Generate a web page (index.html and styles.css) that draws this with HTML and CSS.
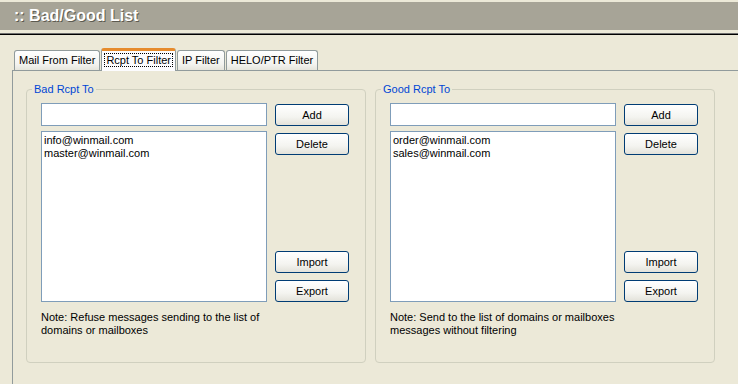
FILE: index.html
```html
<!DOCTYPE html>
<html lang="en">
<head>
    <meta charset="UTF-8">
    <title>Bad/Good List</title>
    <link rel="stylesheet" href="styles.css">
</head>
<body>
    <header class="page-title">
        <h1>:: Bad/Good List</h1>
    </header>
    <div class="title-rule"></div>

    <div class="tabs">
        <a href="#" class="tab">Mail From Filter</a>
        <a href="#" class="tab active"><span>Rcpt To Filter</span></a>
        <a href="#" class="tab">IP Filter</a>
        <a href="#" class="tab">HELO/PTR Filter</a>
    </div>
    <div class="tab-panel">
        <fieldset class="group">
            <legend>Bad Rcpt To</legend>
            <div class="group-body">
                <input type="text" class="entry">
                <div class="list">
                    <div>info@winmail.com</div>
                    <div>master@winmail.com</div>
                </div>
                <div class="buttons">
                    <button>Add</button>
                    <button>Delete</button>
                    <div class="spacer"></div>
                    <button>Import</button>
                    <button>Export</button>
                </div>
                <p class="note">Note: Refuse messages sending to the list of<br>domains or mailboxes</p>
            </div>
        </fieldset>
        <fieldset class="group">
            <legend>Good Rcpt To</legend>
            <div class="group-body">
                <input type="text" class="entry">
                <div class="list">
                    <div>order@winmail.com</div>
                    <div>sales@winmail.com</div>
                </div>
                <div class="buttons">
                    <button>Add</button>
                    <button>Delete</button>
                    <div class="spacer"></div>
                    <button>Import</button>
                    <button>Export</button>
                </div>
                <p class="note">Note: Send to the list of domains or mailboxes<br>messages without filtering</p>
            </div>
        </fieldset>
    </div>
</body>
</html>
```

FILE: styles.css
```css
html, body {
    height: 100%;
}
body {
    margin: 0;
    padding: 0;
    background-color: #ece9d8;
    font-family: Tahoma, "Liberation Sans", Arial, sans-serif;
    font-size: 11px;
    color: #000;
    overflow: hidden;
    display: flex;
    flex-direction: column;
}
.page-title {
    margin-top: 2px;
    height: 28px;
    flex-shrink: 0;
    background-color: #a7a497;
    display: flex;
    align-items: center;
    padding-left: 14px;
}
.page-title h1 {
    margin: 0;
    color: white;
    font-family: "Liberation Sans", Arial, sans-serif;
    font-size: 16px;
    font-weight: bold;
    text-shadow: 1px 1px 0 #5c5a50;
}
.title-rule {
    margin-top: 3px;
    border-top: 1px solid #6e6e6e;
    border-bottom: 1px solid #000;
}
.tabs {
    display: flex;
    align-items: flex-end;
    margin: 13px 0 0 14px;
    height: 22px;
    flex-shrink: 0;
    position: relative;
    z-index: 1;
}
.tab {
    display: block;
    height: 19px;
    line-height: 19px;
    padding: 0 4px;
    margin-right: 1px;
    color: #000;
    text-decoration: none;
    border: 1px solid #919b9c;
    border-bottom: none;
    border-radius: 3px 3px 0 0;
    background: linear-gradient(#ffffff, #f3f3ef 70%, #e6e5dc);
}
.tab.active {
    height: 20px;
    line-height: 18px;
    margin-bottom: -1px;
    padding: 0 2px;
    border-top: 3px solid #e68b2c;
    background: #fcfcfe;
}
.tab.active span {
    border: 1px dotted #000;
    padding: 0 1px;
}
.tab-panel {
    flex: 1;
    margin-left: 12px;
    margin-right: -4px;
    border: 1px solid #919b9c;
    border-bottom: none;
    background-color: #ece9d8;
    display: flex;
    align-items: flex-start;
    gap: 9px;
    padding: 12px 0 0 13px;
}
.group {
    margin: 0;
    width: 340px;
    box-sizing: border-box;
    height: 280px;
    border: 1px solid #d0d0bf;
    border-radius: 4px;
    padding: 0 16px 0 14px;
}
.group legend {
    color: #0046d5;
    padding: 0 2px;
    margin-left: -9px;
    line-height: 13px;
}
.group-body {
    display: grid;
    grid-template-columns: 226px 74px;
    column-gap: 8px;
    row-gap: 5px;
    padding-top: 7px;
}
.entry {
    grid-column: 1;
    grid-row: 1;
    margin: 0;
    height: 23px;
    box-sizing: border-box;
    border: 1px solid #7f9db9;
    background: white;
}
.list {
    grid-column: 1;
    grid-row: 2;
    height: 171px;
    box-sizing: border-box;
    border: 1px solid #7f9db9;
    background: white;
    padding: 2px 2px;
    line-height: 13px;
}
.buttons {
    grid-column: 2;
    grid-row: 1 / 3;
    display: flex;
    flex-direction: column;
    gap: 7px;
    padding-top: 1px;
}
.spacer {
    flex: 1;
}
.buttons button {
    height: 22px;
    width: 74px;
    font-family: inherit;
    font-size: 11px;
    color: #000;
    border: 1px solid #003c74;
    border-radius: 3px;
    background: linear-gradient(#ffffff, #f4f4f0 60%, #e3e2da);
    padding: 0;
}
.note {
    grid-column: 1 / 3;
    grid-row: 3;
    margin: 4px 0 0 0;
    line-height: 13px;
}
```
